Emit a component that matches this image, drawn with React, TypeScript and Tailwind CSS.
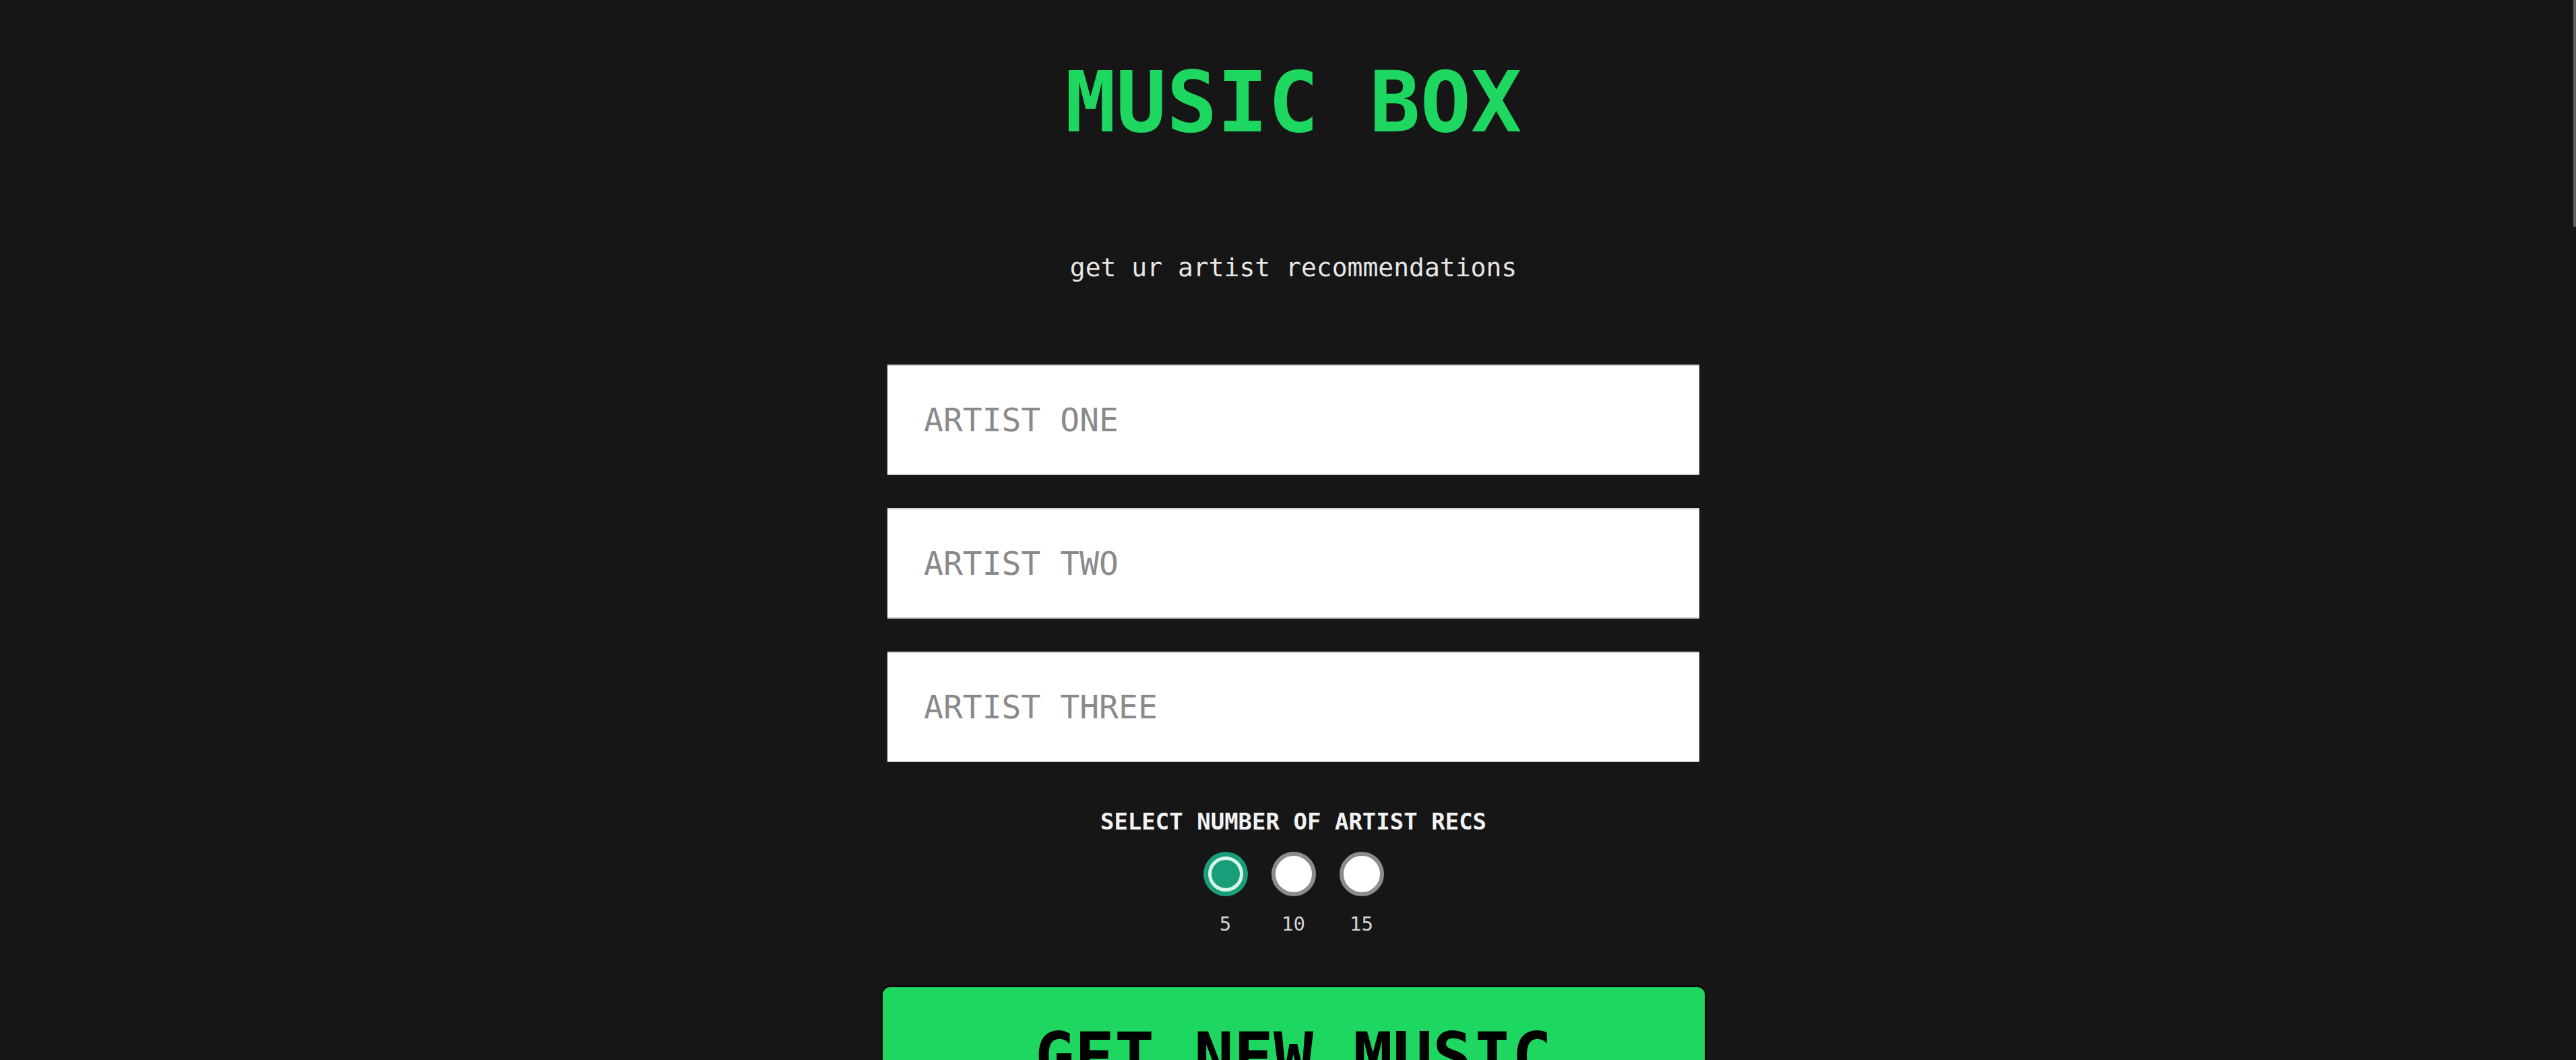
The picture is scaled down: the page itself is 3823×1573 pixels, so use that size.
import React, { useState } from "react";

const counts = [5, 10, 15];

const App = () => {
  const [recs, setRecs] = useState(5);
  const [artists, setArtists] = useState(["", "", ""]);

  const setArtist = (i: number, v: string) =>
    setArtists((prev) => prev.map((a, j) => (j === i ? v : a)));

  return (
    <div className="relative h-[1573px] w-full overflow-hidden bg-[#161616] font-['DejaVu_Sans_Mono',monospace]">
      {/* fake scrollbar thumb */}
      <div className="absolute right-0 top-0 h-[337px] w-[4px] rounded-b-sm bg-[#5f5f5f]" />

      <div className="flex flex-col items-center pl-[16px]">
        <h1 className="mt-[89px] text-[125px] font-bold leading-none text-[#1ed760]">MUSIC BOX</h1>

        <p className="mt-[164px] text-[38px] leading-none text-[#e6e6e6]">get ur artist recommendations</p>

        <form className="mt-[125px] flex w-[1205px] flex-col items-center" onSubmit={(e) => e.preventDefault()}>
          <div className="flex w-full flex-col gap-[49px]">
            {["ARTIST ONE", "ARTIST TWO", "ARTIST THREE"].map((ph, i) => (
              <input
                key={ph}
                value={artists[i]}
                onChange={(e) => setArtist(i, e.target.value)}
                placeholder={ph}
                className="h-[164px] w-full border-y-2 border-[#d4d4d4] bg-white px-[54px] text-[48px] text-black outline-none placeholder:text-[#8a8a8a]"
              />
            ))}
          </div>

          <p className="mt-[71px] text-[34px] font-bold leading-none text-[#f2f2f2]">SELECT NUMBER OF ARTIST RECS</p>

          <div className="mt-[28px] flex gap-[35px]">
            {counts.map((n) => (
              <label key={n} className="flex w-[66px] cursor-pointer flex-col items-center">
                <button
                  type="button"
                  onClick={() => setRecs(n)}
                  className={
                    recs === n
                      ? "flex h-[66px] w-[66px] items-center justify-center rounded-full bg-[#1a9e7a]"
                      : "h-[66px] w-[66px] rounded-full border-[6px] border-[#8c8c8c] bg-white"
                  }
                >
                  {recs === n && (
                    <span className="h-[52px] w-[52px] rounded-full border-[5px] border-[#d6f7ea] bg-[#1a9e7a]" />
                  )}
                </button>
                <span className="mt-[27px] text-[29px] leading-none text-[#d4d4d4]">{n}</span>
              </label>
            ))}
          </div>
        </form>

        <button
          type="button"
          className="mt-[76px] w-[1226px] shrink-0 rounded-[14px] border-[3px] border-[#0a0a0a] bg-[#1ed760] pb-[60px] pt-[54px] text-[98px] font-bold leading-none text-black"
        >
          GET NEW MUSIC
        </button>
      </div>
    </div>
  );
};

export default App;
